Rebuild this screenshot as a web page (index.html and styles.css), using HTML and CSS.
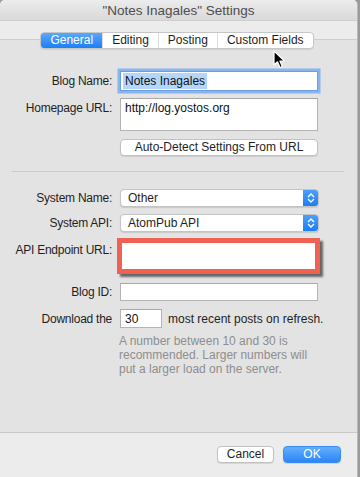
FILE: index.html
```html
<!DOCTYPE html>
<html lang="en">
<head>
  <meta charset="UTF-8" />
  <title>"Notes Inagales" Settings</title>
  <link rel="stylesheet" href="styles.css">
</head>
<body>
  <div class="window">
    <div class="titlebar">"Notes Inagales" Settings</div>

    <div class="tabbar">
      <div class="segmented">
        <span class="seg active">General</span>
        <span class="seg">Editing</span>
        <span class="seg">Posting</span>
        <span class="seg">Custom Fields</span>
      </div>
    </div>

    <div class="content">
      <div class="row">
        <label>Blog Name:</label>
        <div class="field focus"><span class="selected">Notes Inagales</span></div>
      </div>
      <div class="row top">
        <label>Homepage URL:</label>
        <div class="field tall">http://log.yostos.org</div>
      </div>
      <div class="row button-row">
        <label></label>
        <button class="btn wide">Auto-Detect Settings From URL</button>
      </div>

      <div class="separator"></div>

      <div class="row first-select">
        <label>System Name:</label>
        <div class="select">
          <span class="value">Other</span>
          <span class="arrows">
            <svg width="8" height="12" viewBox="0 0 8 12"><path d="M1 5 L4 2 L7 5 M1 7 L4 10 L7 7" fill="none" stroke="#fff" stroke-width="1.4"/></svg>
          </span>
        </div>
      </div>
      <div class="row second-select">
        <label>System API:</label>
        <div class="select">
          <span class="value">AtomPub API</span>
          <span class="arrows">
            <svg width="8" height="12" viewBox="0 0 8 12"><path d="M1 5 L4 2 L7 5 M1 7 L4 10 L7 7" fill="none" stroke="#fff" stroke-width="1.4"/></svg>
          </span>
        </div>
      </div>
      <div class="row top endpoint-row">
        <label>API Endpoint URL:</label>
        <div class="endpoint"></div>
      </div>
      <div class="row blogid-row">
        <label>Blog ID:</label>
        <div class="field"></div>
      </div>
      <div class="row download-row">
        <label>Download the</label>
        <div class="field small">30</div>
        <span class="after">most recent posts on refresh.</span>
      </div>
      <div class="help">A number between 10 and 30 is<br>recommended. Larger numbers will<br>put a larger load on the server.</div>
    </div>

    <div class="footer">
      <button class="btn">Cancel</button>
      <button class="btn primary">OK</button>
    </div>

    <!-- mouse pointer over the tabs -->
    <svg class="cursor" width="14" height="20" viewBox="0 0 14 20">
      <path d="M1 1 L1 15 L4.5 11.8 L7 17.5 L9.3 16.5 L6.9 11 L11.5 11 Z" fill="#000" stroke="#fff" stroke-width="1.2" stroke-linejoin="round"/>
    </svg>
  </div>
</body>
</html>
```

FILE: styles.css
```css
* {
  box-sizing: border-box;
}

body {
  margin: 0;
  padding: 0;
  font-family: 'Liberation Sans', Arial, sans-serif;
  font-size: 12px;
  color: #222;
  background: #9a9a9a;
}

.window {
  position: relative;
  width: 358px;
  height: 477px;
  background: #e3e3e3;
  border-right: 1px solid #b9b9b9;
  display: flex;
  flex-direction: column;
  overflow: hidden;
  border-radius: 5px 5px 0 0;
}

.titlebar {
  height: 21px;
  line-height: 21px;
  text-align: center;
  font-size: 13.5px;
  color: #4d4d4d;
  background: linear-gradient(#ececec, #d9d9d9);
  border-bottom: 1px solid #cfcfcf;
}

.tabbar {
  padding-top: 11px;
  display: flex;
  justify-content: center;
  padding-right: 3px;
  background: linear-gradient(#ececec 0, #ececec 18px, #cecece 18px, #cecece 19px, #e3e3e3 19px);
}

.segmented {
  display: flex;
  height: 17px;
  background: #fff;
  border: 1px solid #c6c6c6;
  border-radius: 4px;
  box-shadow: 0 1px 1px rgba(0, 0, 0, 0.08);
  overflow: hidden;
}

.seg {
  padding: 0 9px;
  line-height: 15px;
  color: #1e1e1e;
  border-left: 1px solid #dcdcdc;
}

.seg:first-child {
  border-left: none;
}

.seg.active {
  color: #fff;
  background: linear-gradient(#5aa8fc, #1b7ff6);
}

.content {
  flex: 1;
  padding-top: 22px;
}

.row {
  display: flex;
  align-items: center;
}

.row.top {
  align-items: flex-start;
}

.row label {
  width: 112px;
  flex: none;
  margin-right: 8px;
  text-align: right;
  line-height: 14px;
  letter-spacing: -0.25px;
  color: #1f1f1f;
}

.row.top label {
  padding-top: 3px;
}

.field {
  width: 198px;
  height: 20px;
  padding: 2px 4px;
  line-height: 14px;
  background: #fff;
  border: 1px solid #b4b4b4;
  border-top-color: #a8a8a8;
  color: #111;
}

.field.focus {
  padding-left: 2px;
  border-color: #6d9fe0;
  box-shadow: 0 0 0 2.5px #86b5f0;
}

.selected {
  background: #b3d6fd;
  padding: 1px 2px;
}

.field.tall {
  margin-top: 7px;
  height: 33px;
}

.row.top:nth-child(2) label {
  margin-top: 7px;
}

.button-row {
  margin-top: 8px;
}

.btn {
  font-family: inherit;
  font-size: 12px;
  height: 17px;
  padding: 0;
  line-height: 15px;
  color: #1e1e1e;
  background: #fff;
  border: 1px solid #c2c2c2;
  border-radius: 4px;
  box-shadow: 0 1px 1px rgba(0, 0, 0, 0.1);
}

.btn.wide {
  width: 198px;
}

.separator {
  margin: 15px 13px 0 12px;
  height: 1px;
  background: #cbcbcb;
}

.first-select {
  margin-top: 17px;
}

.second-select {
  margin-top: 7px;
}

.select {
  width: 199px;
  height: 18px;
  display: flex;
  background: #fff;
  border: 1px solid #c4c4c4;
  border-radius: 4px;
  box-shadow: 0 1px 1px rgba(0, 0, 0, 0.12);
  overflow: hidden;
}

.select .value {
  flex: 1;
  padding-left: 7px;
  line-height: 16px;
  color: #1e1e1e;
}

.select .arrows {
  width: 15px;
  display: flex;
  align-items: center;
  justify-content: center;
  background: linear-gradient(#4c9ffb, #1a7ef5);
}

.endpoint-row {
  margin-top: 6px;
}

.endpoint-row label {
  padding-top: 5px !important;
}

.endpoint {
  margin-left: -3px;
  width: 203px;
  height: 36px;
  background: #fff;
  border: 5px solid #ef6253;
  box-shadow: 3px 3px 2px rgba(0, 0, 0, 0.55);
}

.blogid-row {
  margin-top: 9px;
}

.blogid-row .field {
  height: 18px;
}

.download-row {
  margin-top: 8px;
}

.field.small {
  width: 42px;
  height: 19px;
  padding-left: 4px;
}

.after {
  margin-left: 6px;
  color: #1f1f1f;
}

.help {
  margin: 6px 0 0 119px;
  line-height: 14px;
  color: #8e8e8e;
}

.footer {
  height: 45px;
  padding: 13px 16px 0 0;
  display: flex;
  justify-content: flex-end;
  gap: 9px;
  background: #ececec;
  border-top: 1px solid #c9c9c9;
}

.footer .btn {
  width: 57px;
}

.footer .btn.primary {
  width: 58px;
  color: #fff;
  border-color: #3a8bf5;
  background: linear-gradient(#64aefc, #2a86f7);
}

.cursor {
  position: absolute;
  left: 273px;
  top: 50px;
}
```
